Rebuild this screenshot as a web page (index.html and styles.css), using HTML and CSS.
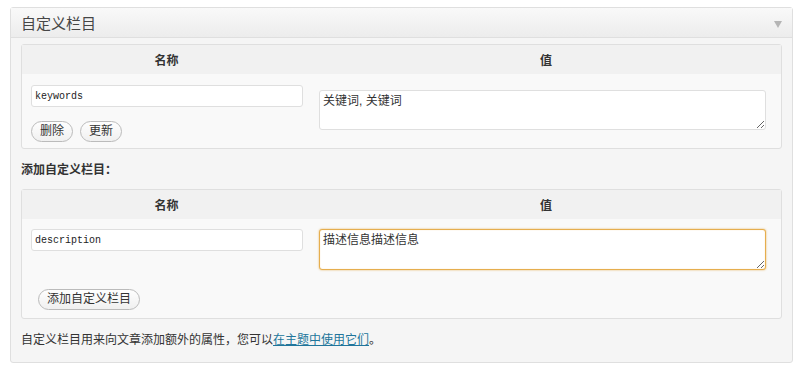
FILE: index.html
```html
<!DOCTYPE html>
<html lang="zh-CN">
<head>
  <meta charset="utf-8">
  <title>自定义栏目</title>
  <link rel="stylesheet" href="styles.css">
</head>
<body>
  <div class="postbox">
    <h3 class="hndle">
      <span>自定义栏目</span>
      <span class="toggle"></span>
    </h3>
    <div class="inside">
      <table class="meta">
        <thead>
          <tr>
            <th class="col-key">名称</th>
            <th>值</th>
          </tr>
        </thead>
        <tbody>
          <tr>
            <td class="left">
              <input class="field" type="text" value="keywords">
              <div class="actions">
                <button class="button">删除</button>
                <button class="button">更新</button>
              </div>
            </td>
            <td class="right">
              <textarea class="value">关键词, 关键词</textarea>
            </td>
          </tr>
        </tbody>
      </table>

      <p class="add-title">添加自定义栏目：</p>

      <table class="meta">
        <thead>
          <tr>
            <th class="col-key">名称</th>
            <th>值</th>
          </tr>
        </thead>
        <tbody>
          <tr>
            <td class="left new">
              <input class="field" type="text" value="description">
            </td>
            <td class="right new">
              <textarea class="value focus">描述信息描述信息</textarea>
            </td>
          </tr>
          <tr>
            <td class="submit" colspan="2">
              <button class="button">添加自定义栏目</button>
            </td>
          </tr>
        </tbody>
      </table>

      <p class="note">自定义栏目用来向文章添加额外的属性，您可以<a href="#">在主题中使用它们</a>。</p>
    </div>
  </div>
</body>
</html>
```

FILE: styles.css
```css
*, *::before, *::after {
  box-sizing: border-box;
}

body {
  margin: 0;
  padding: 7px 0 0 10px;
  background-color: #ffffff;
  color: #333333;
  font-family: "Liberation Sans", "Noto Sans CJK SC", sans-serif;
  font-size: 12px;
}

.postbox {
  width: 783px;
  border: 1px solid #dfdfdf;
  border-radius: 3px;
  background-color: #f5f5f5;
}

.hndle {
  display: flex;
  align-items: center;
  justify-content: space-between;
  height: 30px;
  margin: 0;
  padding: 0 10px;
  border-bottom: 1px solid #dfdfdf;
  background: linear-gradient(to bottom, #f9f9f9, #ececec);
  color: #464646;
  font-size: 15px;
  font-weight: normal;
}

.toggle {
  width: 0;
  height: 0;
  margin-top: 3px;
  border-left: 4px solid transparent;
  border-right: 4px solid transparent;
  border-top: 7px solid #b5b5b5;
}

.inside {
  padding: 6px 10px 14px;
}

.meta {
  width: 761px;
  border: 1px solid #dfdfdf;
  border-radius: 3px;
  border-spacing: 0;
  table-layout: fixed;
  background-color: #f9f9f9;
}

.meta th {
  height: 29px;
  padding: 0;
  background-color: #f1f1f1;
  color: #333333;
  font-size: 12px;
  font-weight: bold;
  text-align: center;
}

.meta .col-key {
  width: 289px;
}

.meta td {
  padding: 0;
  vertical-align: top;
}

.left {
  padding: 11px 0 6px 9px !important;
}

.right {
  padding: 16px 0 0 8px !important;
}

.left.new,
.right.new {
  padding-top: 10px !important;
  padding-bottom: 0 !important;
}

.field {
  display: block;
  width: 272px;
  height: 22px;
  margin: 0;
  padding: 0 3px;
  border: 1px solid #dfdfdf;
  border-radius: 3px;
  background-color: #ffffff;
  color: #222222;
  font-family: "Liberation Mono", monospace;
  font-size: 10px;
}

.value {
  display: block;
  width: 447px;
  height: 40px;
  margin: 0;
  padding: 2px 3px;
  border: 1px solid #dfdfdf;
  border-radius: 3px;
  background-color: #ffffff;
  color: #333333;
  font-family: "Liberation Sans", "Noto Sans CJK SC", sans-serif;
  font-size: 12px;
  line-height: 17px;
  resize: vertical;
  outline: none;
}

.value.focus {
  height: 41px;
  border-color: #e6ae4e;
  box-shadow: 0 0 2px rgba(230, 170, 70, 0.9), inset 0 0 1px rgba(230, 170, 70, 0.6);
}

.actions {
  display: flex;
  gap: 7px;
  margin-top: 14px;
}

.button {
  height: 21px;
  margin: 0;
  padding: 0 8px;
  border: 1px solid #bbbbbb;
  border-radius: 11px;
  background: linear-gradient(to bottom, #fefefe, #f0f0f0);
  color: #333333;
  font-family: "Liberation Sans", "Noto Sans CJK SC", sans-serif;
  font-size: 12px;
  line-height: 19px;
  cursor: pointer;
}

.submit {
  padding: 19px 0 8px 16px !important;
}

.add-title {
  margin: 14px 0 12px;
  color: #333333;
  font-weight: bold;
  line-height: 14px;
}

.note {
  margin: 13px 0 0;
  color: #333333;
  line-height: 16px;
}

.note a {
  color: #21759b;
}
```
